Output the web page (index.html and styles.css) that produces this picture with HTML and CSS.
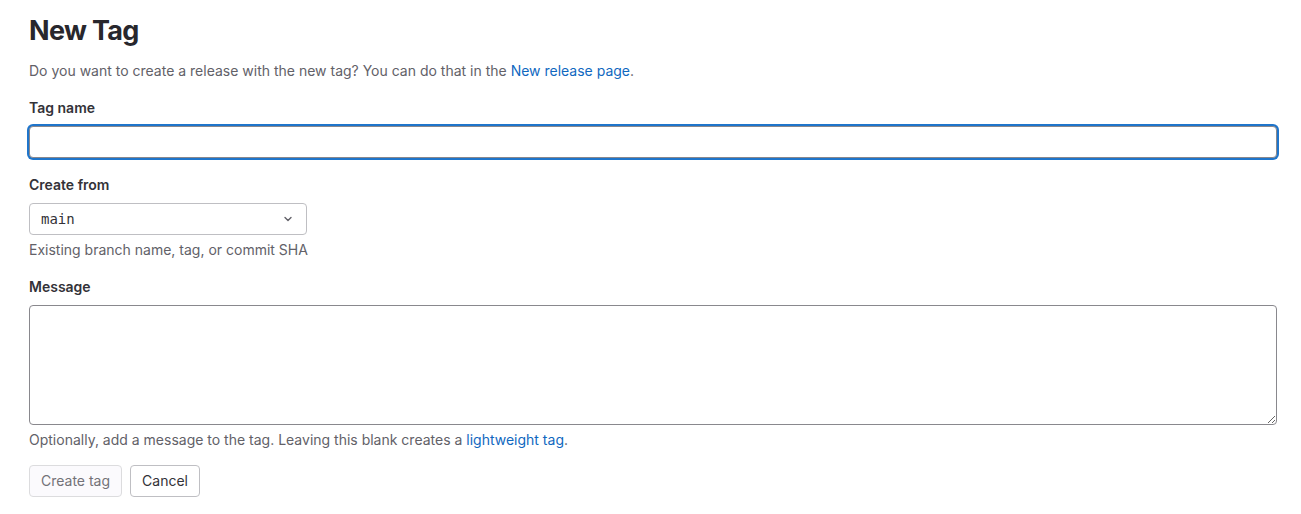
FILE: index.html
```html
<!DOCTYPE html>
<html lang="en">
<head>
<meta charset="utf-8">
<title>New Tag</title>
<link rel="stylesheet" href="styles.css">
</head>
<body>
<main class="page">
  <h1 class="page-title">New Tag</h1>
  <p class="intro">Do you want to create a release with the new tag? You can do that in the <a href="#" class="link">New release page</a>.</p>

  <div class="form-group">
    <label class="label" for="tag">Tag name</label>
    <input id="tag" class="input input-focus" type="text">
  </div>

  <div class="form-group">
    <label class="label">Create from</label>
    <div class="select">
      <span class="select-value">main</span>
      <svg class="chevron" width="16" height="16" viewBox="0 0 16 16" aria-hidden="true"><path d="M5 6.5 8 9.5 11 6.5" fill="none" stroke="#626168" stroke-width="1.4" stroke-linecap="round" stroke-linejoin="round"/></svg>
    </div>
    <p class="help">Existing branch name, tag, or commit SHA</p>
  </div>

  <div class="form-group form-group-last">
    <label class="label" for="msg">Message</label>
    <textarea id="msg" class="textarea"></textarea>
    <p class="help">Optionally, add a message to the tag. Leaving this blank creates a <a href="#" class="link">lightweight tag</a>.</p>
  </div>

  <div class="actions">
    <button class="btn btn-disabled" type="button">Create tag</button>
    <button class="btn" type="button">Cancel</button>
  </div>
</main>
</body>
</html>
```

FILE: styles.css
```css
html, body {
  margin: 0;
  padding: 0;
  background: #fff;
}
body {
  font-family: Inter, "Noto Sans", "Liberation Sans", sans-serif;
  font-size: 14px;
  line-height: 20px;
  color: #333238;
}
.page {
  padding: 0 24px 0 29px;
}
.page-title {
  font-size: 27px;
  line-height: 36px;
  font-weight: 700;
  letter-spacing: -0.025em;
  margin: 13px 0 12px;
  color: #28272d;
}
.intro {
  margin: 0 0 17px;
  color: #626168;
}
.link {
  color: #1068bf;
  text-decoration: none;
}
.form-group {
  margin-bottom: 17px;
}
.form-group-last {
  margin-bottom: 15px;
}
.label {
  display: block;
  font-weight: 600;
  margin-bottom: 8px;
  color: #333238;
}
.input {
  display: block;
  box-sizing: border-box;
  width: 100%;
  height: 32px;
  border: 1px solid #89888d;
  border-radius: 4px;
  padding: 0 12px;
  font: inherit;
  outline: none;
  background: #fff;
}
.input-focus {
  box-shadow: 0 0 0 2px #1f75cb;
}
.select {
  box-sizing: border-box;
  width: 278px;
  height: 32px;
  border: 1px solid #bfbfc3;
  border-radius: 4px;
  display: flex;
  align-items: center;
  justify-content: space-between;
  padding: 0 10px 0 11px;
}
.select-value {
  font-family: "DejaVu Sans Mono", "Liberation Mono", monospace;
  font-size: 14px;
  color: #333238;
}
.chevron {
  display: block;
}
.help {
  margin: 5px 0 0;
  color: #626168;
}
.textarea {
  display: block;
  box-sizing: border-box;
  width: 100%;
  height: 120px;
  border: 1px solid #89888d;
  border-radius: 4px;
  padding: 8px 12px;
  font: inherit;
  outline: none;
  resize: vertical;
  margin: 0;
}
.actions {
  display: flex;
  gap: 8px;
}
.btn {
  box-sizing: border-box;
  height: 32px;
  padding: 0 11px;
  border: 1px solid #bfbfc3;
  border-radius: 4px;
  background: #fff;
  color: #333238;
  font: inherit;
  cursor: pointer;
}
.btn-disabled {
  background: #fbfafd;
  border-color: #dcdcde;
  color: #737278;
  cursor: default;
}
```
